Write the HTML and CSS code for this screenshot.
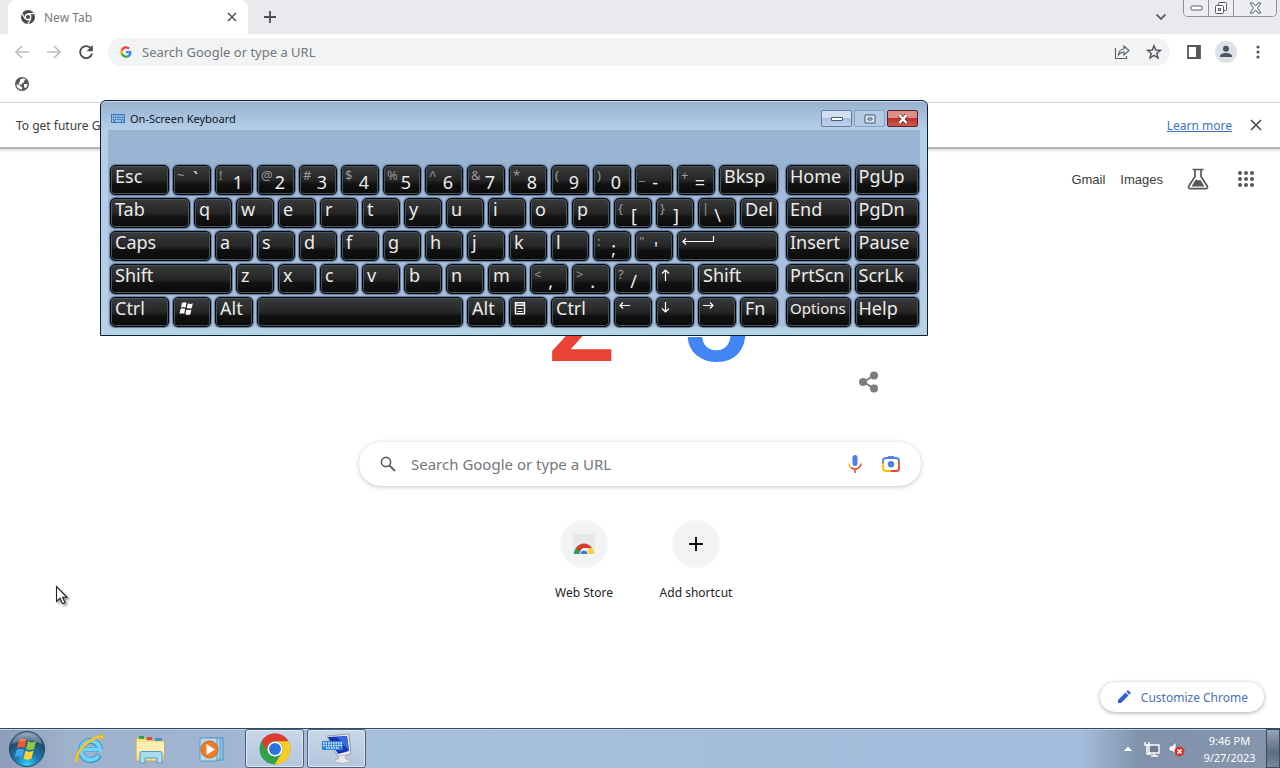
FILE: index.html
```html
<!DOCTYPE html>
<html lang="en">
<head>
<meta charset="utf-8">
<title>New Tab</title>
<link rel="stylesheet" href="styles.css">
</head>
<body>
<div class="browser">
  <div class="tabstrip">
    <div class="tab">
      <svg class="tab-icon" width="14" height="14" viewBox="0 0 14 14"><circle cx="7" cy="7" r="7" fill="#45494d"/><circle cx="7" cy="7" r="3.4" fill="#fff"/><circle cx="7" cy="7" r="2.1" fill="#45494d"/><path d="M7 3.6h6.2M4.1 8.7L1 3.4M9.9 8.7L6.8 14" stroke="#fff" stroke-width="1.1"/></svg>
      <span class="tab-title">New Tab</span>
      <button class="plain" aria-label="Close tab"><svg width="10" height="10" viewBox="0 0 10 10"><path d="M1 1l8 8M9 1l-8 8" stroke="#53575b" stroke-width="1.6"/></svg></button>
    </div>
    <button class="plain new-tab" aria-label="New tab"><svg width="14" height="14" viewBox="0 0 14 14"><path d="M7 1v12M1 7h12" stroke="#4b4f53" stroke-width="1.8"/></svg></button>
    <button class="plain tab-search" aria-label="Search tabs"><svg width="12" height="8" viewBox="0 0 12 8"><path d="M1.500 1.500l4.500 4.500 4.500-4.500" fill="none" stroke="#5f6368" stroke-width="1.800"/></svg></button>
    <div class="win-controls">
      <button aria-label="Minimize"><svg width="13" height="6" viewBox="0 0 13 6"><rect x="1" y="1" width="11" height="4" rx="1" fill="#fff" stroke="#555b66"/></svg></button>
      <button aria-label="Restore"><svg width="14" height="13" viewBox="0 0 14 13"><rect x="4.500" y=".5" width="8" height="8" rx="1" fill="#fff" stroke="#555b66"/><rect x="1.500" y="3.500" width="8" height="8" rx="1" fill="#fff" stroke="#555b66"/><rect x="4.500" y="6.500" width="2" height="2" fill="none" stroke="#555b66"/></svg></button>
      <button class="wide" aria-label="Close"><svg width="13" height="12" viewBox="0 0 13 12"><path d="M1 1h3l2.500 3L9 1h3L8.500 6l3.500 5H9L6.500 8 4 11H1l3.500-5z" fill="#fff" stroke="#555b66"/></svg></button>
    </div>
  </div>

  <div class="toolbar">
    <button class="plain tool" aria-label="Back"><svg width="16" height="14" viewBox="0 0 16 14"><path d="M15 7H2M8 1L2 7l6 6" fill="none" stroke="#b9bcc0" stroke-width="1.700"/></svg></button>
    <button class="plain tool" aria-label="Forward"><svg width="16" height="14" viewBox="0 0 16 14"><path d="M1 7h13M8 1l6 6-6 6" fill="none" stroke="#b9bcc0" stroke-width="1.700"/></svg></button>
    <button class="plain tool" aria-label="Reload"><svg width="16" height="16" viewBox="0 0 16 16"><path d="M13.300 5A6 6 0 1 0 14 9.500" fill="none" stroke="#4b4f53" stroke-width="1.900"/><path d="M14.800 1v6.200H8.600z" fill="#4b4f53"/></svg></button>
    <div class="omnibox">
      <svg width="12" height="12" viewBox="0 0 48 48"><path fill="#4285f4" d="M46 24.500c0-1.600-.1-3.100-.4-4.500H24v9h12.400c-.6 2.900-2.200 5.300-4.600 7v6h7.500C43.600 38 46 31.800 46 24.500z"/><path fill="#34a853" d="M24 47c6.200 0 11.400-2 15.300-5.500l-7.500-5.800c-2 1.400-4.700 2.200-7.800 2.200-6 0-11-4-12.800-9.500H3.500v6C7.300 42 15 47 24 47z"/><path fill="#fbbc05" d="M11.200 28.400a13.800 13.800 0 0 1 0-8.800v-6H3.500a23 23 0 0 0 0 20.800z"/><path fill="#ea4335" d="M24 10.200c3.400 0 6.400 1.200 8.800 3.400l6.600-6.600A23 23 0 0 0 3.500 13.600l7.700 6C13 14.100 18 10.200 24 10.200z"/></svg>
      <input class="omni-input" type="text" aria-label="Address and search bar" placeholder="Search Google or type a URL">
      <button class="plain tool" aria-label="Share"><svg width="16" height="16" viewBox="0 0 16 16"><path d="M1.500 4v10.500h11V12M4.500 11c.4-4 2.500-6 5.500-6V2l5 4.500-5 4.500V8C7.500 8 6 9 4.500 11z" fill="none" stroke="#5f6368" stroke-width="1.200"/></svg></button>
      <button class="plain tool" aria-label="Bookmark this tab"><svg width="16" height="16" viewBox="0 0 16 16"><path d="M8 1.800l1.700 4.300 4.700.3-3.600 3 1.200 4.500L8 11.400 4 13.900l1.200-4.500-3.600-3 4.700-.3z" fill="none" stroke="#54585c" stroke-width="1.500"/></svg></button>
    </div>
    <button class="plain tool" aria-label="Side panel"><svg width="14" height="14" viewBox="0 0 14 14"><path d="M1 1h12v12H1z" fill="none" stroke="#54585c" stroke-width="1.800"/><path d="M9 1h4v12H9z" fill="#54585c"/></svg></button>
    <button class="plain tool" aria-label="Profile"><svg width="22" height="22" viewBox="0 0 22 22"><circle cx="11" cy="11" r="11" fill="#dde1e8"/><circle cx="11" cy="7.700" r="3" fill="#4b5563"/><path d="M5 16v-1c0-2 3.500-3 6-3s6 1 6 3v1z" fill="#4b5563"/></svg></button>
    <button class="plain tool" aria-label="Menu"><svg width="4" height="14" viewBox="0 0 4 14"><g fill="#54585c"><circle cx="2" cy="2" r="1.600"/><circle cx="2" cy="7" r="1.600"/><circle cx="2" cy="12" r="1.600"/></g></svg></button>
  </div>

  <div class="bookmarks">
    <button class="plain tool" aria-label="Bookmark"><svg width="14" height="14" viewBox="0 0 14 14"><circle cx="7" cy="7" r="7" fill="#54585c"/><path d="M1.500 7.500c2 0 3.500.3 4 2l1.500.5v2.500C3.500 12.500 1.500 10 1.500 7.500zM5 2.500l3-.9c1 0 2 .3 2.500.8L9 4v1.500L7 6v1.500H4.500L3.500 6 5 4.500zM9 7h3.500c0 2-1 3.500-2 4.300L9 10z" fill="#fff"/></svg></button>
  </div>

  <div class="infobar">
    <span>To get future Google Chrome updates</span>
    <a class="learn" href="#">Learn more</a>
    <button class="plain" aria-label="Dismiss"><svg width="12" height="12" viewBox="0 0 12 12"><path d="M1 1l10 10M11 1L1 11" stroke="#4b4f53" stroke-width="1.700"/></svg></button>
  </div>

  <main class="page">
    <nav class="page-nav">
      <a href="#">Gmail</a>
      <a href="#">Images</a>
      <button class="plain labs" aria-label="Search Labs"><svg width="22" height="22" viewBox="0 0 22 22"><path d="M5.500 1.500h11M8 1.500v7L1.800 18c-.8 1.500 0 2.700 1.500 2.700h15.400c1.500 0 2.300-1.200 1.500-2.700L14 8.500v-7" fill="none" stroke="#56595d" stroke-width="1.700"/><path d="M4.500 18.500l4-6.500c1.500-1 2 .8 5 0l4 6.500z" fill="#56595d"/></svg></button>
      <button class="plain" aria-label="Google apps"><svg width="16" height="16" viewBox="0 0 16 16"><g fill="#56595d"><circle cx="2" cy="2" r="2"/><circle cx="8" cy="2" r="2"/><circle cx="14" cy="2" r="2"/><circle cx="2" cy="8" r="2"/><circle cx="8" cy="8" r="2"/><circle cx="14" cy="8" r="2"/><circle cx="2" cy="14" r="2"/><circle cx="8" cy="14" r="2"/><circle cx="14" cy="14" r="2"/></g></svg></button>
    </nav>
    <section class="center">
      <div class="doodle"><span class="red">2</span><span class="blue">5</span></div>
      <div class="share-row"><button class="plain" aria-label="Share doodle"><svg width="20" height="22" viewBox="0 0 20 22"><path d="M15 4.500L4.500 11 15 17.500" fill="none" stroke="#7d7d7d" stroke-width="2"/><g fill="#7d7d7d"><circle cx="15" cy="4.500" r="4"/><circle cx="4" cy="11" r="4"/><circle cx="15" cy="17.500" r="4"/></g></svg></button></div>
      <div class="search">
        <svg width="16" height="16" viewBox="0 0 16 16"><circle cx="6" cy="6" r="4.600" fill="none" stroke="#5f6368" stroke-width="1.700"/><path d="M9.500 9.500l5.500 5.500" stroke="#5f6368" stroke-width="2"/></svg>
        <input class="search-input" type="text" aria-label="Search" placeholder="Search Google or type a URL">
        <button class="plain" aria-label="Search by voice"><svg width="14" height="18" viewBox="0 0 14 18"><rect x="4.500" y="0" width="5" height="11" rx="2.500" fill="#4e7fe4"/><path d="M1 8.500c0 2 .8 3.300 2 4.200" fill="none" stroke="#fbbc05" stroke-width="1.600"/><path d="M3 12.600c2.500 1.900 5.500 1.900 8 0 1.300-1 2-2.300 2-4.100" fill="none" stroke="#ea4335" stroke-width="1.600"/><path d="M7 14v4" stroke="#e2703a" stroke-width="1.800"/></svg></button>
        <button class="plain" aria-label="Search by image"><svg width="18" height="18" viewBox="0 0 18 18"><path d="M1 8V6q0-3 3-3h10q3 0 3 3" fill="none" stroke="#4e7fe4" stroke-width="1.800"/><path d="M5 3l1.500-2h5L13 3z" fill="#4e7fe4"/><path d="M17 6v7q0 3-3 3H9" fill="none" stroke="#ea4335" stroke-width="1.800"/><path d="M9 16H4q-3 0-3-3V8" fill="none" stroke="#fbbc05" stroke-width="1.800"/><circle cx="9" cy="9.300" r="3.200" fill="#4e7fe4"/></svg></button>
      </div>
      <div class="shortcuts">
        <a class="shortcut" href="#"><span class="disc"><svg width="24" height="24" viewBox="0 0 24 24"><path d="M1 2h22v20H1z" fill="#e6ebe9"/><path d="M2 22a10 10 0 0 1 4-8l4 8z" fill="#2c9a50"/><path d="M22 22a10 10 0 0 0-4-8l-4 8z" fill="#fbd035"/><path d="M4 16a9.500 9.500 0 0 1 16 0H11l-3 3z" fill="#d63c2f"/><path d="M7.500 22a4.500 4.500 0 0 1 9 0z" fill="#fff"/><path d="M8.500 22a3.500 3.500 0 0 1 7 0z" fill="#4374e0"/></svg></span>Web Store</a>
        <a class="shortcut" href="#"><span class="disc"><svg width="14" height="14" viewBox="0 0 14 14"><path d="M7 0v14M0 7h14" stroke="#111" stroke-width="2"/></svg></span>Add shortcut</a>
      </div>
    </section>
    <button class="customize"><svg width="14" height="14" viewBox="0 0 14 14"><path d="M1 13v-3l7.500-7.500 3 3L4 13zM9.300 1.700L10.500.5q.5-.4 1 0l2 2q.4.5 0 1l-1.200 1.200z" fill="#2f62d0"/></svg>Customize Chrome</button>
  </main>
</div>

<footer class="taskbar">
  <button class="task start" aria-label="Start"><svg width="38" height="38" viewBox="0 0 38 38"><defs><radialGradient id="orb" cx=".5" cy=".95" r=".95"><stop offset="0" stop-color="#35d3f5"/><stop offset=".35" stop-color="#1a7fb4"/><stop offset=".75" stop-color="#234b70"/><stop offset="1" stop-color="#8fa6bc"/></radialGradient></defs><circle cx="19" cy="19" r="17.500" fill="url(#orb)" stroke="#27415c"/><path d="M11 10q4-3 7.500 0l-2 8q-4-2-7.500 0z" fill="#ef5b2a"/><path d="M20 11q4 2.500 8 0l-2 8q-4 2-8 0z" fill="#8fc93c"/><path d="M8.500 20q4-2.500 7.500 0l-2 7.500q-4-2.500-7.500 0z" fill="#43a5e8"/><path d="M17.500 20.500q4 2.500 8 0l-2 8q-4 2.500-8 0z" fill="#fcd335"/><path d="M4 14a16 16 0 0 1 30 0q-15-7-30 0z" fill="#fff" opacity=".25"/></svg></button>
  <button class="task app" aria-label="Internet Explorer"><svg width="34" height="34" viewBox="0 0 34 34"><path d="M8 17.500h18" stroke="#2d93cf" stroke-width="5"/><path d="M26 23a9.500 9.500 0 1 1 1-5.500" fill="none" stroke="#2d93cf" stroke-width="6"/><path d="M25.500 23.500a9.500 9.500 0 1 1 1.500-6H9" fill="none" stroke="#75d3f6" stroke-width="4"/><path d="M3 31C-1 24 11 7 27 3c4-1 5 1 2 5 0-3-3-2.500-6-1C12 12 4 22 5 29q0 2-2 2z" fill="#f6cd31" stroke="#d3a52a" stroke-width=".6"/></svg></button>
  <button class="task app" aria-label="Windows Explorer"><svg width="34" height="34" viewBox="0 0 34 34"><path d="M2 6h9l2 2h17v21H2z" fill="#f3df8a" stroke="#c4a95c"/><path d="M5 4h5v3H5z" fill="#3c9b46"/><path d="M13 5h5v3h-5z" fill="#d84a31"/><path d="M21 6h7v3h-7z" fill="#3f94d0"/><path d="M3 10h27v13H3z" fill="#f9eeb0"/><path d="M6 31V21q0-1.500 1.500-1.500h19Q28 19.500 28 21v10h-5v-5H11v5z" fill="#a9dcf3" stroke="#519dca"/></svg></button>
  <button class="task app" aria-label="Windows Media Player"><svg width="34" height="34" viewBox="0 0 34 34"><path d="M12 6h16v22H12z" fill="#8fc7e8" stroke="#4b8fc0"/><path d="M9 6h16v22H9z" fill="#a6d3ee" stroke="#5c9bc6"/><path d="M5 6h17v23H5z" fill="#b9d8ee" stroke="#5c9bc6"/><circle cx="14.500" cy="17.500" r="8.500" fill="#ec7d24" stroke="#c8651b"/><path d="M11.500 12v11l8.500-5.500z" fill="#fff"/></svg></button>
  <button class="task running" aria-label="Google Chrome"><svg width="32" height="32" viewBox="0 0 32 32"><circle cx="16" cy="16" r="15.500" fill="#2fa14c"/><path d="M2.500 8.300A15.500 15.500 0 0 1 29.500 8.300H16A7.700 7.700 0 0 0 9.300 19.800z" fill="#e03b2e"/><path d="M29.500 8.300A15.500 15.500 0 0 1 15.700 31.500L22.700 19.800A7.700 7.700 0 0 0 16 8.300z" fill="#fbca24"/><circle cx="16" cy="16" r="7.600" fill="#fff"/><circle cx="16" cy="16" r="6" fill="#2b73e0"/></svg></button>
  <button class="task running" aria-label="On-Screen Keyboard"><svg width="32" height="32" viewBox="0 0 32 32"><path d="M6 3l22-2 2 20-13 3z" fill="#e8edf2" stroke="#8f9bab"/><path d="M7 4l19-1 2 15-11 3z" fill="#1433b8"/><path d="M16 4l10-1 2 15z" fill="#3d66df"/><path d="M17 23l7-1 1 4q6 1 3 3-6 3-14 0-2-3 4-3z" fill="#e5e7e8" stroke="#a4a9b0" stroke-width=".7"/><path d="M1 8h21v9H1z" fill="#2d85d2"/><path d="M2 10h19M2 12.500h19M5 15h13" stroke="#e9f6ff" stroke-width="1.300" stroke-dasharray="1.500 1"/></svg></button>
  <div class="tray">
    <button class="plain" aria-label="Show hidden icons"><svg width="8" height="5" viewBox="0 0 8 5"><path d="M0 5l4-4.500L8 5z" fill="#fff"/></svg></button>
    <svg width="16" height="16" viewBox="0 0 16 16"><path d="M5 4h10v8H5z" fill="#6d7e94" stroke="#fff" stroke-width="1.400"/><path d="M7 15h7M10 12v3" stroke="#fff" stroke-width="1.400"/><path d="M1 1v3h4V1M3 4v9h4" fill="none" stroke="#fff" stroke-width="1.400"/></svg>
    <svg width="17" height="16" viewBox="0 0 17 16"><path d="M1 5h3l4-4v13l-4-4H1z" fill="#f4f6f8" stroke="#56657a" stroke-width=".6"/><circle cx="11.500" cy="10.500" r="5" fill="#d3372d"/><path d="M9.500 8.500l4 4M13.500 8.500l-4 4" stroke="#fff" stroke-width="1.500"/></svg>
    <div class="clock"><span>9:46 PM</span><span>9/27/2023</span></div>
    <button class="show-desktop" aria-label="Show desktop"></button>
  </div>
</footer>

<section class="osk">
  <header class="osk-title">
    <svg width="14" height="9" viewBox="0 0 14 9"><path d="M0 0h14v9H0z" fill="#3779be"/><path d="M1 2h12M1 4.500h12M1 7h2M11 7h2" stroke="#d5e9fa" stroke-width="1.300" stroke-dasharray="1.300 .8"/><path d="M4 7h6" stroke="#d5e9fa" stroke-width="1.200"/></svg>
    <span class="osk-name">On-Screen Keyboard</span>
    <button class="osk-btn" aria-label="Minimize"><svg width="12" height="6" viewBox="0 0 12 6"><path d="M.5 1.500h11v3H.5z" fill="#fff" stroke="#4d5b72"/></svg></button>
    <button class="osk-btn dim" aria-label="Maximize"><svg width="12" height="10" viewBox="0 0 12 10"><path d="M1 1h10v8H1z" fill="#dde7f2" stroke="#4d5b72"/><path d="M4 4h4v2H4z" fill="none" stroke="#4d5b72"/></svg></button>
    <button class="osk-btn close" aria-label="Close"><svg width="12" height="10" viewBox="0 0 12 10"><path d="M2.500 1l7 8M9.500 1l-7 8" stroke="#59312f" stroke-width="4"/><path d="M2.500 1l7 8M9.500 1l-7 8" stroke="#fff" stroke-width="2.500"/></svg></button>
  </header>
  <div class="osk-body">
    <div class="keys main-keys">
      <button class="key w3">Esc</button>
      <button class="key two quote"><i>~</i><b>`</b></button>
      <button class="key two"><i>!</i><b>1</b></button>
      <button class="key two"><i>@</i><b>2</b></button>
      <button class="key two"><i>#</i><b>3</b></button>
      <button class="key two"><i>$</i><b>4</b></button>
      <button class="key two"><i>%</i><b>5</b></button>
      <button class="key two"><i>^</i><b>6</b></button>
      <button class="key two"><i>&amp;</i><b>7</b></button>
      <button class="key two"><i>*</i><b>8</b></button>
      <button class="key two"><i>(</i><b>9</b></button>
      <button class="key two"><i>)</i><b>0</b></button>
      <button class="key two punct"><i>_</i><b>-</b></button>
      <button class="key two"><i>+</i><b>=</b></button>
      <button class="key w3">Bksp</button>

      <button class="key w4">Tab</button>
      <button class="key">q</button><button class="key">w</button><button class="key">e</button><button class="key">r</button><button class="key">t</button><button class="key">y</button><button class="key">u</button><button class="key">i</button><button class="key">o</button><button class="key">p</button>
      <button class="key two punct"><i>{</i><b>[</b></button>
      <button class="key two punct"><i>}</i><b>]</b></button>
      <button class="key two punct"><i>|</i><b>\</b></button>
      <button class="key">Del</button>

      <button class="key w5">Caps</button>
      <button class="key">a</button><button class="key">s</button><button class="key">d</button><button class="key">f</button><button class="key">g</button><button class="key">h</button><button class="key">j</button><button class="key">k</button><button class="key">l</button>
      <button class="key two punct"><i>:</i><b>;</b></button>
      <button class="key two punct"><i>"</i><b>'</b></button>
      <button class="key w5" aria-label="Enter"><svg width="34" height="10" viewBox="0 0 34 10"><path d="M31.500 0v5.500H1M4 2.500l-3 3 3 3" fill="none" stroke="#fff" stroke-width="1.200"/></svg></button>

      <button class="key w6">Shift</button>
      <button class="key">z</button><button class="key">x</button><button class="key">c</button><button class="key">v</button><button class="key">b</button><button class="key">n</button><button class="key">m</button>
      <button class="key two punct"><i>&lt;</i><b>,</b></button>
      <button class="key two punct"><i>&gt;</i><b>.</b></button>
      <button class="key two punct"><i>?</i><b>/</b></button>
      <button class="key" aria-label="Up"><svg width="12" height="12" viewBox="0 0 12 12"><path d="M4.500 12V1M1 4.500L4.500 1 8 4.500" fill="none" stroke="#fff" stroke-width="1.200"/></svg></button>
      <button class="key w4">Shift</button>

      <button class="key w3">Ctrl</button>
      <button class="key" aria-label="Windows"><svg width="16" height="14" viewBox="0 0 16 14"><path d="M4 .8Q6.500-.5 8.500.8L7.500 5.700Q5 4.500 3 5.700zM9.800 1.300q2.500 1.200 5 0l-1 4.700q-2.500 1.200-5 0zM2.600 6.900Q5 5.700 7.200 7l-1 4.800Q4 10.600 1.500 11.800zM8.400 7.400q2.500 1.200 5 0l-1 4.900q-2.500 1.200-5 0z" fill="#fff"/></svg></button>
      <button class="key">Alt</button>
      <button class="key w10" aria-label="Space"></button>
      <button class="key">Alt</button>
      <button class="key" aria-label="Context menu"><svg width="12" height="14" viewBox="0 0 12 14"><path d="M1.500.7h9v11h-9zM1 3.300h10" fill="none" stroke="#fff" stroke-width="1.400"/><path d="M3.500 6.500h5M3.500 9.500h5" stroke="#fff"/></svg></button>
      <button class="key w3">Ctrl</button>
      <button class="key" aria-label="Left"><svg width="12" height="10" viewBox="0 0 12 10"><path d="M11 3.500H1M4 .5l-3 3 3 3" fill="none" stroke="#fff" stroke-width="1.200"/></svg></button>
      <button class="key" aria-label="Down"><svg width="12" height="12" viewBox="0 0 12 12"><path d="M4.500 0v10M1 6.500L4.500 10 8 6.500" fill="none" stroke="#fff" stroke-width="1.200"/></svg></button>
      <button class="key" aria-label="Right"><svg width="12" height="10" viewBox="0 0 12 10"><path d="M0 3.500h10M7 .5l3 3-3 3" fill="none" stroke="#fff" stroke-width="1.200"/></svg></button>
      <button class="key">Fn</button>
    </div>
    <div class="keys side-keys">
      <button class="key side">Home</button><button class="key side">PgUp</button>
      <button class="key side">End</button><button class="key side">PgDn</button>
      <button class="key side">Insert</button><button class="key side">Pause</button>
      <button class="key side">PrtScn</button><button class="key side">ScrLk</button>
      <button class="key side small">Options</button><button class="key side">Help</button>
    </div>
  </div>
</section>

<svg class="cursor" width="14" height="21" viewBox="0 0 14 21"><path d="M1.500 1.500v15l3.500-3.300 2.500 5.500 2.500-1.200-2.500-5.200h4.500z" fill="#fff" stroke="#222" stroke-width="1.100"/></svg>
</body>
</html>
```
FILE: styles.css
```css
* { box-sizing: border-box; }
body {
  margin: 0;
  height: 100vh;
  display: flex;
  flex-direction: column;
  overflow: hidden;
  background: #fff;
  color: #3c3c3c;
  font-family: "Noto Sans", "Open Sans", sans-serif;
  font-size: 12px;
}
svg { display: block; flex: none; }
button, input { font: inherit; color: inherit; }
button { cursor: pointer; }
.plain { border: 0; background: none; padding: 0; display: flex; align-items: center; justify-content: center; }
.browser { flex: 1; min-height: 0; display: flex; flex-direction: column; }

.tabstrip { height: 34px; display: flex; background: #e8eaed; padding: 0 3px 0 8px; }
.tab {
  width: 240px;
  display: flex;
  align-items: center;
  padding: 0 11px 0 13px;
  background: #fff;
  border-radius: 8px 8px 0 0;
}
.tab-title { flex: 1; padding-left: 9px; color: #75787c; }
.new-tab { width: 28px; margin-left: 8px; }
.tab-search { margin-left: auto; width: 28px; margin-right: 8px; }
.win-controls { display: flex; height: 17px; border: 1px solid #8c919b; border-top: 0; border-radius: 0 0 5px 5px; overflow: hidden; }
.win-controls button { width: 25px; padding: 0; border: 0; border-right: 1px solid #8c919b; background: #eceef1; display: flex; align-items: center; justify-content: center; }
.win-controls .wide { width: 42px; border-right: 0; }

.toolbar { height: 36px; display: flex; align-items: center; padding: 0 6px; }
.tool { width: 32px; height: 28px; flex: none; }
.omnibox {
  flex: 1;
  display: flex;
  align-items: center;
  height: 28px;
  margin: 0 8px 0 6px;
  padding-left: 12px;
  border-radius: 14px;
  background: #f1f3f4;
}
.omni-input { flex: 1; border: 0; background: none; padding: 0 10px; font-size: 13px; outline: 0; }
input::placeholder { color: #74777b; opacity: 1; }
.bookmarks { height: 33px; padding: 0 6px; border-bottom: 1px solid #cfd1d4; }
.infobar { height: 46px; display: flex; align-items: center; padding: 0 18px 0 16px; border-bottom: 2px solid #b4b4b4; box-shadow: 0 1px 3px #ccc; }
.learn { margin: 0 18px 0 auto; color: #3a74c0; text-decoration: underline; }

.page { flex: 1; min-height: 0; position: relative; }
.page-nav { height: 60px; display: flex; align-items: center; gap: 15px; padding: 0 26px; justify-content: flex-end; font: 13px "Liberation Sans", Arial, sans-serif; }
.page-nav a { color: #3c3c3c; text-decoration: none; }
.labs { margin: 0 14px 0 9px; }
.center { max-width: 562px; margin: 0 auto; }
.doodle { height: 162px; display: flex; align-items: flex-end; justify-content: center; gap: 64px; padding-left: 16px; font: 500 124px/104px Roboto, sans-serif; }
.red { color: #ea4335; }
.blue { color: #4285f4; }
.share-row { display: flex; justify-content: flex-end; padding: 0 42px 49px 0; }
.search {
  height: 44px;
  display: flex;
  align-items: center;
  gap: 20px;
  padding: 0 21px;
  border-radius: 22px;
  background: #fff;
  box-shadow: 0 1px 5px #c4c6c9;
}
.search-input { flex: 1; min-width: 0; margin-left: -5px; border: 0; padding: 0; background: none; font-size: 15px; outline: 0; }
.shortcuts { display: flex; justify-content: center; padding-top: 34px; }
.shortcut { width: 112px; display: flex; flex-direction: column; align-items: center; gap: 16px; color: #222; text-decoration: none; }
.disc { width: 48px; height: 48px; border-radius: 50%; background: #f1f3f4; display: flex; align-items: center; justify-content: center; }
.customize {
  position: absolute;
  right: 16px;
  bottom: 16px;
  height: 30px;
  display: flex;
  align-items: center;
  gap: 10px;
  padding: 0 16px 0 17px;
  border: 0;
  border-radius: 15px;
  background: #fff;
  color: #4a70ba;
  box-shadow: 0 1px 4px #aaa;
}

.taskbar {
  height: 40px;
  display: flex;
  align-items: stretch;
  border-top: 1px solid #2f4966;
  background: linear-gradient(90deg, #8c9db9 0, #9eb1cd 70px, #a0b5d2 220px, #a6bfdd 380px, #a4bddc 1080px, #8193ab 1140px, #8495ac 100%);
  box-shadow: inset 0 1px #c2d2e5;
}
.task { border: 0; background: none; padding: 0; display: flex; align-items: center; justify-content: center; }
.start { width: 54px; margin-right: 5px; }
.app { width: 61px; }
.running { width: 59px; margin: 0 0 0 3px; border: 1px solid #4b607c; border-radius: 3px; background: linear-gradient(#c9d7e8, #b3c5dd); box-shadow: inset 0 0 1px 1px #dce7f3; }
.tray { margin-left: auto; display: flex; align-items: center; gap: 8px; color: #fff; }
.tray .plain { padding-right: 4px; }
.clock { width: 73px; display: flex; flex-direction: column; align-items: center; line-height: 17px; font-size: 11px; }
.show-desktop { align-self: stretch; width: 14px; margin-left: -8px; padding: 0; border: 1px solid #3d4b5e; background: linear-gradient(#97a5b5, #5c6c80 60%, #78889b); }

.osk {
  position: absolute;
  left: 100px;
  top: 100px;
  width: 828px;
  border: 1px solid #0d2038;
  border-radius: 6px 6px 0 0;
  padding: 0 7px 8px;
  background: linear-gradient(#97b1cf, #b6cfe9 29px, #b4cce7 60%, #b7d3e4);
  box-shadow: inset 0 1px #c9dcee;
}
.osk-title { height: 29px; display: flex; align-items: center; padding: 6px 2px 0 3px; gap: 5px; color: #0b1626; }
.osk-name { flex: 1; font-size: 11px; }
.osk-btn { width: 31px; height: 17px; margin-left: -3px; padding: 0; display: flex; align-items: center; justify-content: center; border: 1px solid #64809f; border-radius: 2px; background: linear-gradient(#d2e0f1 45%, #a9c1de 50%, #bfd3ec); }
.osk-btn.dim { border-color: #86a0bf; background: #b5cae4; }
.osk-btn.close { border-color: #54222a; background: linear-gradient(#dc9087 45%, #b9352c 50%, #d2584b); }
.osk-body { display: flex; gap: 8px; padding: 35px 1px 0 2px; background: linear-gradient(#99b3d2 35px, #a8bfe0 80px, #aac0df); }
.keys { display: grid; column-gap: 4px; row-gap: 3px; grid-auto-rows: 30px; }
.main-keys { flex: 668; grid-template-columns: repeat(32, minmax(0, 1fr)); }
.side-keys { flex: 133; grid-template-columns: 1fr 1fr; }
.key {
  grid-column: span 2;
  min-width: 0;
  padding: 0 0 0 4px;
  display: flex;
  align-items: flex-start;
  border: 1px solid #05070b;
  border-radius: 5px;
  background: linear-gradient(#393a3b, #262626 50%, #111 65%, #0b0b0b);
  box-shadow: inset 0 0 0 1px #46535c, 0 0 1px 1px #5f7896;
  color: #ececec;
  font-size: 18px;
  line-height: 21px;
  text-align: left;
  white-space: nowrap;
}
.key svg { margin-top: 4px; }
.w3 { grid-column: span 3; }
.w4 { grid-column: span 4; }
.w5 { grid-column: span 5; }
.w6 { grid-column: span 6; }
.w10 { grid-column: span 10; }
.side { grid-column: span 1; padding-left: 3px; }
.small { font-size: 15px; line-height: 20px; }
.two { justify-content: space-between; padding: 0 9px 0 3px; }
.two i, .two b { font-style: normal; font-weight: 400; }
.two i { color: #999; font-size: 13px; line-height: 18px; }
.two b { padding-top: 6px; }
.two.punct { padding-right: 14px; }
.two.quote { padding-right: 12px; }
.two.quote b { padding-top: 2px; }

.cursor { position: absolute; left: 55px; top: 585px; filter: drop-shadow(2px 2px 1px #999); }
```
